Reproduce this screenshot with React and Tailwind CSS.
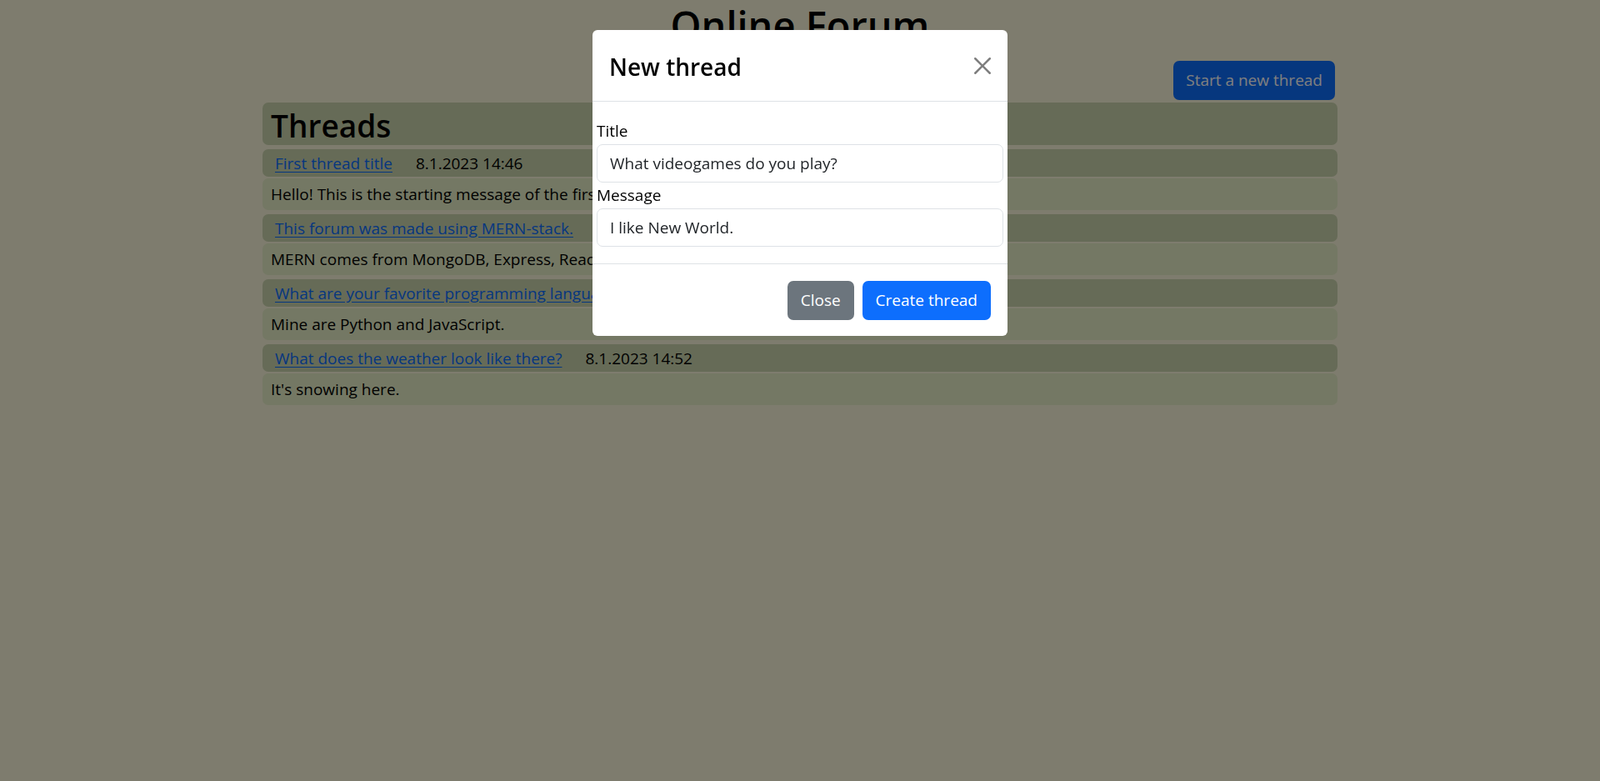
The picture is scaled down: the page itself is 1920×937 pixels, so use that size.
const threads = [
  {
    id: 1,
    title: "First thread title",
    date: "8.1.2023 14:46",
    message: "Hello! This is the starting message of the first thread.",
  },
  {
    id: 2,
    title: "This forum was made using MERN-stack.",
    date: "8.1.2023 14:48",
    message: "MERN comes from MongoDB, Express, React and Node.js.",
  },
  {
    id: 3,
    title: "What are your favorite programming languages?",
    date: "8.1.2023 14:50",
    message: "Mine are Python and JavaScript.",
  },
  {
    id: 4,
    title: "What does the weather look like there?",
    date: "8.1.2023 14:52",
    message: "It's snowing here.",
  },
];

function ThreadItem({ thread }) {
  return (
    <div className="mt-[5px]">
      <div className="flex h-[33px] items-center rounded-[7px] bg-[#ccd6ae] pl-[15px] leading-[30px]">
        <a href="#" className="text-[#0d6efd] underline underline-offset-[3px]">
          {thread.title}
        </a>
        <span className="ml-[28px]">{thread.date}</span>
      </div>
      <div className="mt-[2px] flex h-[38px] items-center rounded-[7px] bg-[#e8f0c8] px-[10px] leading-[30px]">
        {thread.message}
      </div>
    </div>
  );
}

function NewThreadModal() {
  return (
    <>
      <div className="fixed inset-0 bg-black/50" />
      <div className="fixed inset-0 overflow-hidden">
        <div className="mx-auto mt-[36px] w-[498px] rounded-[6px] bg-white">
          <div className="flex h-[86px] items-center justify-between border-b border-[#dee2e6] pl-[20px] pr-[20px]">
            <h5 className="pt-[2px] text-[28px] font-semibold leading-[36px] text-black">New thread</h5>
            <button type="button" className="flex h-[20px] w-[20px] items-center justify-center">
              <svg viewBox="0 0 16 16" width="20" height="20" fill="#000" opacity="0.5">
                <path d="M.293.293a1 1 0 0 1 1.414 0L8 6.586 14.293.293a1 1 0 1 1 1.414 1.414L9.414 8l6.293 6.293a1 1 0 0 1-1.414 1.414L8 9.414l-6.293 6.293a1 1 0 0 1-1.414-1.414L6.586 8 .293 1.707a1 1 0 0 1 0-1.414" />
              </svg>
            </button>
          </div>
          <form className="px-[5px] py-[20px]">
            <label className="block leading-[30px] text-black">Title</label>
            <input
              readOnly
              value="What videogames do you play?"
              className="mt-[1px] block h-[46px] w-full rounded-[7px] border border-[#dee2e6] px-[15px] text-[#212529] outline-none"
            />
            <label className="block leading-[30px] text-black">Message</label>
            <input
              readOnly
              value="I like New World."
              className="mt-[1px] block h-[46px] w-full rounded-[7px] border border-[#dee2e6] px-[15px] text-[#212529] outline-none"
            />
          </form>
          <div className="flex justify-end gap-[10px] border-t border-[#dee2e6] pb-[19px] pr-[20px] pt-[20px]">
            <button type="button" className="h-[47px] rounded-[7px] bg-[#6c757d] px-[16px] text-white">
              Close
            </button>
            <button type="button" className="h-[47px] rounded-[7px] bg-[#0d6efd] px-[16px] text-white">
              Create thread
            </button>
          </div>
        </div>
      </div>
    </>
  );
}

export default function App() {
  return (
    <div
      className="min-h-[937px] bg-[#fcf8dc] text-[19px] text-black"
      style={{ fontFamily: '"Open Sans", "Noto Sans", sans-serif' }}
    >
      <div className="mx-auto w-[1290px]">
        <h1 className="text-center text-[47px] font-semibold leading-[60px]">Online Forum</h1>
        <div className="mt-[13px] flex justify-end pr-[3px]">
          <button type="button" className="h-[47px] rounded-[7px] bg-[#0d6efd] px-[15px] text-white">
            Start a new thread
          </button>
        </div>
        <div className="mt-[3px] h-[51px] rounded-[7px] bg-[#ccd6ae] px-[10px] pt-[4px]">
          <h2 className="text-[37px] font-semibold leading-[47px]">Threads</h2>
        </div>
        {threads.map((thread) => (
          <ThreadItem key={thread.id} thread={thread} />
        ))}
      </div>
      <NewThreadModal />
    </div>
  );
}
